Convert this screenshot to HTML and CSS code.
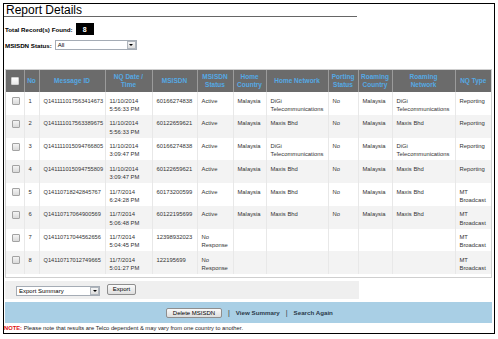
FILE: index.html
```html
<!DOCTYPE html>
<html>
<head>
<meta charset="utf-8">
<link rel="stylesheet" href="styles.css">
</head>
<body>
<div class="frame">
  <div class="title">Report Details</div>
  <div class="total-row">
    <span class="label">Total Record(s) Found:</span>
    <span class="count">8</span>
  </div>
  <div class="status-row">
    <span class="label">MSISDN Status:</span>
    <div class="fake-select status-select"><span class="sel-text">All</span><span class="sel-btn"><span class="tri"></span></span></div>
  </div>
  <div class="table-wrap">
    <table class="grid">
      <colgroup>
        <col class="c-chk"><col class="c-no"><col class="c-id"><col class="c-date"><col class="c-msisdn"><col class="c-status"><col class="c-hc"><col class="c-hn"><col class="c-port"><col class="c-rc"><col class="c-rn"><col class="c-type">
      </colgroup>
      <thead>
        <tr>
          <th><span class="chk chk-head"></span></th>
          <th>No</th>
          <th>Message ID</th>
          <th>NQ Date /<br>Time</th>
          <th>MSISDN</th>
          <th>MSISDN<br>Status</th>
          <th>Home<br>Country</th>
          <th>Home Network</th>
          <th>Porting<br>Status</th>
          <th>Roaming<br>Country</th>
          <th>Roaming<br>Network</th>
          <th>NQ Type</th>
        </tr>
      </thead>
      <tbody>
        <tr>
          <td class="cc"><span class="chk"></span></td><td>1</td><td class="mid">Q141111017563414673</td><td>11/10/2014<br>5:56:33 PM</td><td>60166274838</td><td>Active</td><td>Malaysia</td><td>DiGi<br>Telecommunications</td><td>No</td><td>Malaysia</td><td>DiGi<br>Telecommunications</td><td>Reporting</td>
        </tr>
        <tr class="alt">
          <td class="cc"><span class="chk"></span></td><td>2</td><td class="mid">Q141111017563389675</td><td>11/10/2014<br>5:56:33 PM</td><td>60122659621</td><td>Active</td><td>Malaysia</td><td>Maxis Bhd</td><td>No</td><td>Malaysia</td><td>Maxis Bhd</td><td>Reporting</td>
        </tr>
        <tr>
          <td class="cc"><span class="chk"></span></td><td>3</td><td class="mid">Q141111015094766805</td><td>11/10/2014<br>3:09:47 PM</td><td>60166274838</td><td>Active</td><td>Malaysia</td><td>DiGi<br>Telecommunications</td><td>No</td><td>Malaysia</td><td>DiGi<br>Telecommunications</td><td>Reporting</td>
        </tr>
        <tr class="alt">
          <td class="cc"><span class="chk"></span></td><td>4</td><td class="mid">Q141111015094755809</td><td>11/10/2014<br>3:09:47 PM</td><td>60122659621</td><td>Active</td><td>Malaysia</td><td>Maxis Bhd</td><td>No</td><td>Malaysia</td><td>Maxis Bhd</td><td>Reporting</td>
        </tr>
        <tr>
          <td class="cc"><span class="chk"></span></td><td>5</td><td class="mid">Q14110718242845767</td><td>11/7/2014<br>6:24:28 PM</td><td>60173200599</td><td>Active</td><td>Malaysia</td><td>Maxis Bhd</td><td>No</td><td>Malaysia</td><td>Maxis Bhd</td><td>MT<br>Broadcast</td>
        </tr>
        <tr class="alt">
          <td class="cc"><span class="chk"></span></td><td>6</td><td class="mid">Q14110717064900569</td><td>11/7/2014<br>5:06:48 PM</td><td>60122195699</td><td>Active</td><td>Malaysia</td><td>Maxis Bhd</td><td>No</td><td>Malaysia</td><td>Maxis Bhd</td><td>MT<br>Broadcast</td>
        </tr>
        <tr>
          <td class="cc"><span class="chk"></span></td><td>7</td><td class="mid">Q14110717044562656</td><td>11/7/2014<br>5:04:45 PM</td><td>12398932023</td><td>No<br>Response</td><td></td><td></td><td></td><td></td><td></td><td>MT<br>Broadcast</td>
        </tr>
        <tr class="alt">
          <td class="cc"><span class="chk"></span></td><td>8</td><td class="mid">Q14110717012749665</td><td>11/7/2014<br>5:01:27 PM</td><td>122195699</td><td>No<br>Response</td><td></td><td></td><td></td><td></td><td></td><td>MT<br>Broadcast</td>
        </tr>
      </tbody>
    </table>
  </div>
  <div class="export-bar">
    <div class="fake-select export-select"><span class="sel-text">Export Summary</span><span class="sel-btn"><span class="tri"></span></span></div>
    <span class="btn export-btn">Export</span>
  </div>
  <div class="action-bar">
    <span class="btn delete-btn">Delete MSISDN</span>
    <span class="sep">|</span>
    <span class="link">View Summary</span>
    <span class="sep">|</span>
    <span class="link">Search Again</span>
  </div>
  <div class="note"><span class="note-label">NOTE:</span> Please note that results are Telco dependent &amp; may vary from one country to another.</div>
</div>
</body>
</html>
```
FILE: styles.css
```css
* { box-sizing: border-box; }
html, body { margin: 0; padding: 0; background: #fff; }
body {
  padding: 3px 0 0 3px;
  font-family: "Liberation Sans", Arial, sans-serif;
  color: #333;
}
.frame {
  width: 492px;
  height: 331px;
  border: 1px solid #000;
  display: flex;
  flex-direction: column;
}
.title {
  width: 353px;
  font-size: 12px;
  line-height: 12px;
  height: 13px;
  padding-left: 2px;
  color: #000;
  border-bottom: 1px solid #666;
}
.label {
  font-size: 6.2px;
  font-weight: bold;
  color: #000;
}
.total-row {
  margin-top: 6px;
  height: 12px;
  padding-left: 1px;
  display: flex;
  align-items: center;
}
.count {
  margin-left: 3px;
  width: 18px;
  height: 12px;
  background: #000;
  color: #fff;
  font-weight: bold;
  font-size: 7px;
  display: flex;
  align-items: center;
  justify-content: center;
}
.status-row {
  margin-top: 5px;
  height: 10px;
  padding-left: 1px;
  display: flex;
  align-items: center;
}
.fake-select {
  height: 10px;
  border: 1px solid #a5acb5;
  background: #fff;
  display: flex;
  align-items: center;
  justify-content: space-between;
  font-size: 6px;
  color: #000;
}
.sel-text { padding-left: 2px; }
.sel-btn {
  width: 9px;
  height: 8px;
  border: 1px solid #b0b6bd;
  background: linear-gradient(#f6f6f6, #dcdcdc);
  display: flex;
  align-items: center;
  justify-content: center;
}
.tri {
  width: 0; height: 0;
  border-left: 2px solid transparent;
  border-right: 2px solid transparent;
  border-top: 2px solid #000;
}
.status-select { margin-left: 3px; width: 82px; }
.table-wrap {
  margin-top: 19px;
  margin-left: 1px;
  width: 487px;
  border: 1px solid #cfcfcf;
  padding-bottom: 3px;
}
.grid {
  width: 485px;
  border-collapse: collapse;
  table-layout: fixed;
  font-size: 5.85px;
}
.c-chk { width: 18px; }
.c-no { width: 15px; }
.c-id { width: 66px; }
.c-date { width: 47px; }
.c-msisdn { width: 45px; }
.c-status { width: 36px; }
.c-hc { width: 33px; }
.c-hn { width: 62px; }
.c-port { width: 30px; }
.c-rc { width: 34px; }
.c-rn { width: 63px; }
.c-type { width: 36px; }
.grid th {
  height: 22px;
  background: #6b6b6b;
  color: #55a9e4;
  font-size: 6.5px;
  font-weight: bold;
  line-height: 8.5px;
  text-align: center;
  vertical-align: middle;
  padding: 0;
  white-space: nowrap;
  border-left: 1px solid #9b9b9b;
}
.grid th:first-child { border-left: none; }
.grid td {
  height: 22.75px;
  vertical-align: top;
  padding: 4.5px 0 0 4px;
  line-height: 8.3px;
  color: #333;
  white-space: nowrap;
  overflow: visible;
  border-left: 1px solid #e8e8e8;
}
.grid td.mid { font-size: 5.65px; }
.grid td:first-child { border-left: none; }
.grid td.cc { padding: 5px 0 0 6px; }
.grid tr.alt td { background: #f3f3f3; }
.chk {
  display: block;
  width: 8px;
  height: 8px;
  border: 1px solid #a3a3a3;
  border-radius: 1px;
  background: linear-gradient(#f4f4f4, #dadada);
}
.chk-head {
  margin-left: 5px;
  background: linear-gradient(#ffffff, #e9e9e9);
  border-color: #cfcfcf;
}
.export-bar {
  margin-top: 3px;
  margin-left: 1px;
  width: 354px;
  height: 18px;
  background: #efefef;
  display: flex;
  align-items: center;
  padding-left: 11px;
}
.export-select { width: 84px; margin-top: 1px; }
.btn {
  display: inline-flex;
  align-items: center;
  justify-content: center;
  font-size: 6px;
  color: #000;
  border: 1px solid #8e8e8e;
  border-radius: 2px;
  background: linear-gradient(#fafafa, #dedede);
}
.export-btn { margin-left: 7px; width: 29px; height: 11px; margin-top: -2px; }
.action-bar {
  margin-top: 3px;
  margin-left: 1px;
  width: 487px;
  height: 21px;
  background: #a9cfe5;
  display: flex;
  align-items: center;
  padding-left: 161px;
  font-size: 6.2px;
}
.delete-btn { width: 56px; height: 10px; }
.sep { margin: 0 6px; color: #333; font-size: 7px; }
.link { font-weight: bold; color: #2b3a4a; }
.note {
  height: 10px;
  line-height: 10px;
  font-size: 5.8px;
  color: #222;
  padding-left: 0;
}
.note-label { color: #e01010; font-weight: bold; }
```
